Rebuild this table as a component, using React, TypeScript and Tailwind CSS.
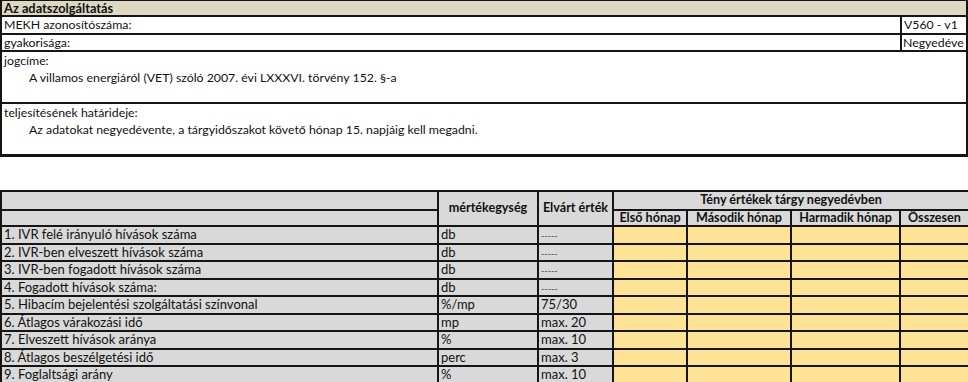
import React from "react";

const rows = [
  ["1. IVR felé irányuló hívások száma", "db", "-----"],
  ["2. IVR-ben elveszett hívások száma", "db", "-----"],
  ["3. IVR-ben fogadott hívások száma", "db", "-----"],
  ["4. Fogadott hívások száma:", "db", "-----"],
  ["5. Hibacím bejelentési szolgáltatási színvonal", "%/mp", "75/30"],
  ["6. Átlagos várakozási idő", "mp", "max. 20"],
  ["7. Elveszett hívások aránya", "%", "max. 10"],
  ["8. Átlagos beszélgetési idő", "perc", "max. 3"],
  ["9. Foglaltsági arány", "%", "max. 10"],
];

const cell = "border-2 border-[#151515] px-[2px] leading-none whitespace-nowrap overflow-hidden";
const head = `${cell} text-center text-[12.6px]`;

const App = () => {
  return (
    <div className="w-[968px] h-[382px] bg-white overflow-hidden text-[13px] text-[#111] font-['Lato','Liberation_Sans',sans-serif]">
      {/* adatszolgáltatás box */}
      <div className="border-t border-x-2 border-b-[3px] border-[#151515] text-[12.3px]">
        <div className="h-[16px] bg-[#dcd8c2] border-b-2 border-[#151515] px-[2px] font-bold text-[12.8px] leading-[14px]">
          Az adatszolgáltatás
        </div>
        <div className="h-[18px] flex border-b-2 border-[#151515] leading-[16px]">
          <div className="flex-1 px-[2px]">MEKH azonosítószáma:</div>
          <div className="w-[66px] border-l-2 border-[#151515] px-[2px]">V560 - v1</div>
        </div>
        <div className="h-[17px] flex border-b-2 border-[#151515] leading-[15px]">
          <div className="flex-1 px-[2px]">gyakorisága:</div>
          <div className="w-[66px] border-l-2 border-[#151515] px-[1px] overflow-hidden whitespace-nowrap">Negyedéve</div>
        </div>
        <div className="h-[52px] border-b-2 border-[#151515] px-[2px] leading-[17px]">
          <div>jogcíme:</div>
          <div className="pl-[25px]">A villamos energiáról (VET) szóló 2007. évi LXXXVI. törvény 152. §-a</div>
        </div>
        <div className="h-[50px] px-[2px] leading-[17px]">
          <div>teljesítésének határideje:</div>
          <div className="pl-[25px]">Az adatokat negyedévente, a tárgyidőszakot követő hónap 15. napjáig kell megadni.</div>
        </div>
      </div>

      {/* táblázat */}
      <table className="mt-[33px] w-[968px] table-fixed border-collapse">
        <colgroup>
          <col className="w-[437px]" />
          <col className="w-[100px]" />
          <col className="w-[75px]" />
          <col className="w-[74px]" />
          <col className="w-[104px]" />
          <col className="w-[109px]" />
          <col className="w-[69px]" />
        </colgroup>
        <thead>
          <tr className="h-[19px] bg-[#d9d9d9] font-bold">
            <th className={cell}></th>
            <th rowSpan={2} className={head}>mértékegység</th>
            <th rowSpan={2} className={head}>Elvárt érték</th>
            <th colSpan={4} className={head}>Tény értékek tárgy negyedévben</th>
          </tr>
          <tr className="h-[16px] bg-[#d9d9d9] font-bold">
            <th className={cell}></th>
            <th className={head}>Első hónap</th>
            <th className={head}>Második hónap</th>
            <th className={head}>Harmadik hónap</th>
            <th className={head}>Összesen</th>
          </tr>
        </thead>
        <tbody>
          {rows.map(([name, unit, expected]) => (
            <tr key={name} className="h-[17.5px]">
              <td className={`${cell} bg-[#d9d9d9]`}>{name}</td>
              <td className={`${cell} bg-[#d9d9d9]`}>{unit}</td>
              <td className={`${cell} bg-[#d9d9d9]`}>
                {expected === "-----" ? <span className="text-[9px] text-[#444]">-----</span> : expected}
              </td>
              <td className={`${cell} bg-[#fee397]`}></td>
              <td className={`${cell} bg-[#fee397]`}></td>
              <td className={`${cell} bg-[#fee397]`}></td>
              <td className={`${cell} bg-[#fee397]`}></td>
            </tr>
          ))}
        </tbody>
      </table>
    </div>
  );
};

export default App;
